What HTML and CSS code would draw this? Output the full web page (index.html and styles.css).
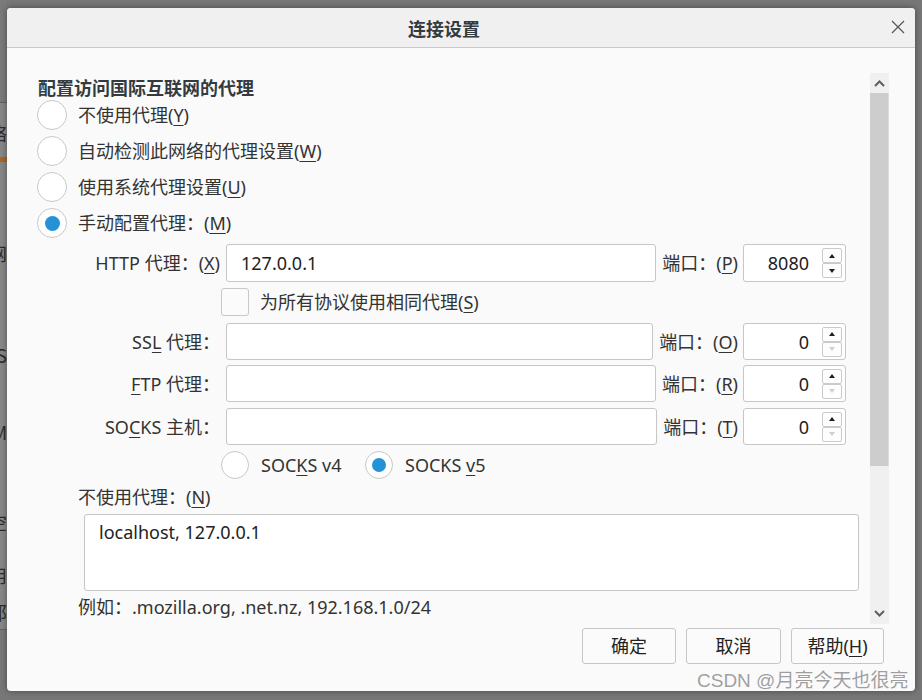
FILE: index.html
```html
<!DOCTYPE html>
<html lang="zh-CN">
<head>
<meta charset="utf-8">
<title>连接设置</title>
<link rel="stylesheet" href="styles.css">
</head>
<body>
<div class="backwin">
  <div class="bw-top"></div>
  <div class="bw-main">
    <div class="bw-glyph g1"><span>络</span></div>
    <div class="bw-bar"></div>
    <div class="bw-glyph g2"><span>网</span></div>
    <div class="bw-glyph g3"><span>S</span></div>
    <div class="bw-glyph g4"><span>M</span></div>
    <div class="bw-glyph g5"><span>空</span></div>
    <div class="bw-glyph g6"><span>用</span></div>
    <div class="bw-glyph g7"><span>那</span></div>
  </div>
</div>
<div class="dialog">
  <div class="titlebar">
    <span class="title">连接设置</span>
    <span class="close">
      <svg width="14" height="14" viewBox="0 0 14 14"><path d="M1 1 L13 13 M13 1 L1 13" stroke="#555" stroke-width="1.2" fill="none"/></svg>
    </span>
  </div>
  <div class="main">
    <div class="content">
      <div class="heading">配置访问国际互联网的代理</div>
      <div class="radio-row"><span class="radio"></span><span>不使用代理(<u>Y</u>)</span></div>
      <div class="radio-row"><span class="radio"></span><span>自动检测此网络的代理设置(<u>W</u>)</span></div>
      <div class="radio-row"><span class="radio"></span><span>使用系统代理设置(<u>U</u>)</span></div>
      <div class="radio-row"><span class="radio on"></span><span>手动配置代理：(<u>M</u>)</span></div>

      <div class="proxy">
        <div class="prow r-http">
          <span class="plabel">HTTP 代理：(<u>X</u>)</span>
          <div class="field">127.0.0.1</div>
          <span class="port-label">端口：(<u>P</u>)</span>
          <div class="port">
            <span class="port-val">8080</span>
            <span class="spin"><span class="spin-btn"><i class="up"></i></span><span class="spin-btn"><i class="down"></i></span></span>
          </div>
        </div>
        <div class="check-row">
          <span class="checkbox"></span><span>为所有协议使用相同代理(<u>S</u>)</span>
        </div>
        <div class="prow r-ssl">
          <span class="plabel">SS<u>L</u> 代理：</span>
          <div class="field"></div>
          <span class="port-label">端口：(<u>O</u>)</span>
          <div class="port">
            <span class="port-val">0</span>
            <span class="spin"><span class="spin-btn"><i class="up"></i></span><span class="spin-btn"><i class="down off"></i></span></span>
          </div>
        </div>
        <div class="prow r-ftp">
          <span class="plabel"><u>F</u>TP 代理：</span>
          <div class="field"></div>
          <span class="port-label">端口：(<u>R</u>)</span>
          <div class="port">
            <span class="port-val">0</span>
            <span class="spin"><span class="spin-btn"><i class="up"></i></span><span class="spin-btn"><i class="down off"></i></span></span>
          </div>
        </div>
        <div class="prow r-socks">
          <span class="plabel">SO<u>C</u>KS 主机：</span>
          <div class="field"></div>
          <span class="port-label">端口：(<u>T</u>)</span>
          <div class="port">
            <span class="port-val">0</span>
            <span class="spin"><span class="spin-btn"><i class="up"></i></span><span class="spin-btn"><i class="down off"></i></span></span>
          </div>
        </div>
        <div class="socks-row">
          <span class="socks-opt v4"><span class="radio sm"></span><span>SOC<u>K</u>S v4</span></span>
          <span class="socks-opt"><span class="radio sm on"></span><span>SOCKS <u>v</u>5</span></span>
        </div>
      </div>

      <div class="noproxy-label">不使用代理：(<u>N</u>)</div>
      <div class="textarea">localhost, 127.0.0.1</div>
      <div class="example">例如：.mozilla.org, .net.nz, 192.168.1.0/24</div>
    </div>
    <div class="scrollbar">
      <div class="sb-btn sb-up">
        <svg width="11" height="7" viewBox="0 0 11 7"><path d="M1 6 L5.5 1.5 L10 6" stroke="#5f5f5f" stroke-width="2" fill="none"/></svg>
      </div>
      <div class="sb-thumb"></div>
      <div class="sb-track"></div>
      <div class="sb-btn sb-down">
        <svg width="11" height="7" viewBox="0 0 11 7"><path d="M1 1 L5.5 5.5 L10 1" stroke="#5f5f5f" stroke-width="2" fill="none"/></svg>
      </div>
    </div>
  </div>
  <div class="footer">
    <button class="btn b-ok">确定</button>
    <button class="btn b-cancel">取消</button>
    <button class="btn b-help">帮助(<u>H</u>)</button>
  </div>
  <div class="watermark">CSDN @月亮今天也很亮</div>
</div>
</body>
</html>
```

FILE: styles.css
```css
* { box-sizing: border-box; }

body {
  margin: 0;
  width: 922px;
  height: 700px;
  overflow: hidden;
  background: #777777;
  display: flex;
  align-items: flex-start;
  font-family: "Noto Sans", "Noto Sans CJK SC", sans-serif;
  font-size: 18px;
  color: #333333;
}

/* window behind the dialog, only a sliver visible */
.backwin {
  width: 7px;
  height: 700px;
  flex: none;
  overflow: hidden;
  display: flex;
  flex-direction: column;
}
.bw-top {
  height: 103px;
  background: #7a7a7a;
  border-bottom: 1px solid #626262;
}
.bw-main {
  height: 527px;
  background: #878787;
  border-bottom: 1px solid #666666;
  display: flex;
  flex-direction: column;
}
.bw-glyph {
  height: 18px;
  line-height: 18px;
  display: flex;
  justify-content: flex-end;
  color: #2c2c2c;
  font-family: "Noto Sans CJK SC", sans-serif;
  font-size: 18px;
}
.bw-glyph span { flex: none; }
.g1 { margin-top: 21px; }
.bw-bar { height: 5px; margin-top: 15px; background: #a8691c; }
.g2 { margin-top: 82px; }
.g3 { margin-top: 84px; }
.g4 { margin-top: 59px; }
.g5 { margin-top: 72px; }
.g6 { margin-top: 35px; }
.g7 { margin-top: 19px; }

/* dialog */
.dialog {
  position: relative;
  flex: none;
  width: 908px;
  height: 683px;
  margin-top: 8px;
  background: #fafafa;
  border-radius: 4px;
  box-shadow: 0 0 6px rgba(0, 0, 0, 0.4);
  display: flex;
  flex-direction: column;
}

.titlebar {
  flex: none;
  height: 40px;
  background: #f0f0f0;
  border-bottom: 1px solid #c9c9c9;
  border-radius: 4px 4px 0 0;
  display: flex;
  align-items: center;
}
.title {
  flex: 1;
  text-align: center;
  font-family: "Noto Sans CJK SC", sans-serif;
  font-weight: bold;
  font-size: 18px;
  color: #333a40;
}
.close {
  width: 34px;
  display: flex;
  justify-content: center;
  padding-bottom: 1px;
}

.main {
  flex: none;
  height: 576px;
  display: flex;
}
.content {
  flex: 1;
  padding: 30px 11px 0 30px;
  overflow: hidden;
}

u {
  text-decoration-thickness: 1px;
  text-underline-offset: 3px;
}

.heading {
  height: 19px;
  line-height: 19px;
  margin-left: 1px;
  font-family: "Noto Sans CJK SC", sans-serif;
  font-weight: bold;
  font-size: 18px;
  color: #333a40;
}

.radio-row {
  height: 36px;
  display: flex;
  align-items: center;
  gap: 11px;
  line-height: 20px;
}
.radio {
  flex: none;
  width: 30px;
  height: 30px;
  border-radius: 50%;
  border: 1px solid #c8c8c8;
  background: #ffffff;
  display: flex;
  align-items: center;
  justify-content: center;
}
.radio.sm { width: 28px; height: 28px; }
.radio.on::after {
  content: "";
  width: 15px;
  height: 15px;
  border-radius: 50%;
  background: #2592d8;
}
.radio.sm.on::after { width: 14px; height: 14px; }

.proxy {
  margin: 3px 13px 0 41px;
}
.prow {
  display: flex;
  align-items: center;
  height: 37px;
  line-height: 20px;
}
.r-http { height: 38px; }
.r-ssl { margin-top: 3px; }
.r-ftp { margin-top: 5px; }
.r-socks { margin-top: 6px; }

.plabel {
  flex: none;
  width: 148px;
  padding-right: 6px;
  text-align: right;
  white-space: nowrap;
}
.field {
  flex: 1;
  height: 100%;
  border: 1px solid #c6c6c6;
  border-radius: 3px;
  background: #ffffff;
  padding-left: 14px;
  display: flex;
  align-items: center;
  color: #222222;
}
.port-label {
  flex: none;
  margin: 0 5px 0 6px;
  white-space: nowrap;
}
.port {
  flex: none;
  width: 103px;
  height: 100%;
  border: 1px solid #c6c6c6;
  border-radius: 3px;
  background: #ffffff;
  display: flex;
  align-items: center;
  color: #222222;
}
.port-val {
  flex: 1;
  text-align: right;
  padding-right: 13px;
}
.spin {
  flex: none;
  width: 20px;
  margin-right: 3px;
  display: flex;
  flex-direction: column;
}
.spin-btn {
  height: 15px;
  border: 1px solid #cacaca;
  border-radius: 2px;
  background: #fdfdfd;
  display: flex;
  align-items: center;
  justify-content: center;
}
.spin-btn + .spin-btn { margin-top: 0; }
.up, .down {
  width: 0;
  height: 0;
  border-left: 3.5px solid transparent;
  border-right: 3.5px solid transparent;
}
.up { border-bottom: 4px solid #1e1e1e; }
.down { border-top: 4px solid #1e1e1e; }
.down.off { border-top-color: #cfcfcf; }

.check-row {
  margin-top: 2px;
  height: 36px;
  padding-left: 143px;
  display: flex;
  align-items: center;
  gap: 11px;
  line-height: 20px;
}
.checkbox {
  flex: none;
  width: 28px;
  height: 28px;
  border: 1px solid #c8c8c8;
  border-radius: 3px;
  background: #fbfbfb;
}

.socks-row {
  margin-top: 5px;
  height: 30px;
  padding-left: 143px;
  display: flex;
  align-items: center;
  line-height: 20px;
}
.socks-opt {
  display: flex;
  align-items: center;
  gap: 12px;
}
.socks-opt.v4 { width: 144px; }

.noproxy-label {
  margin: 7px 0 0 41px;
  height: 20px;
  line-height: 20px;
}
.textarea {
  margin: 7px 0 0 47px;
  height: 77px;
  border: 1px solid #c6c6c6;
  border-radius: 3px;
  background: #ffffff;
  padding: 7px 14px;
  line-height: 20px;
  color: #222222;
}
.example {
  margin: 6px 0 0 41px;
  height: 20px;
  line-height: 20px;
}

.scrollbar {
  flex: none;
  width: 19px;
  height: 551px;
  margin: 25px 26px 0 0;
  background: #f0f0f0;
  display: flex;
  flex-direction: column;
}
.sb-btn {
  flex: none;
  display: flex;
  align-items: center;
  justify-content: center;
}
.sb-up { height: 20px; }
.sb-down { height: 22px; }
.sb-thumb {
  flex: none;
  height: 373px;
  background: #cdcdcd;
  border-right: 1px solid #dcdcdc;
}
.sb-track { flex: 1; }

.footer {
  flex: 1;
  display: flex;
  justify-content: flex-end;
  align-items: flex-start;
  gap: 10px;
  padding: 4px 31px 0 0;
}
.btn {
  width: 94px;
  height: 36px;
  border: 1px solid #c6c6c6;
  border-radius: 3px;
  background: #fbfbfb;
  font-family: "Noto Sans", "Noto Sans CJK SC", sans-serif;
  font-size: 18px;
  color: #222222;
  padding: 0;
  line-height: 20px;
}
.b-cancel { width: 95px; }
.b-help { width: 93px; }

.watermark {
  position: absolute;
  left: 690px;
  top: 661px;
  line-height: 24px;
  font-family: "Liberation Sans", "Noto Sans CJK SC", sans-serif;
  font-size: 19px;
  color: rgba(128, 128, 128, 0.75);
  text-shadow: 0 0 2px rgba(255, 255, 255, 0.6);
  white-space: nowrap;
}
```
